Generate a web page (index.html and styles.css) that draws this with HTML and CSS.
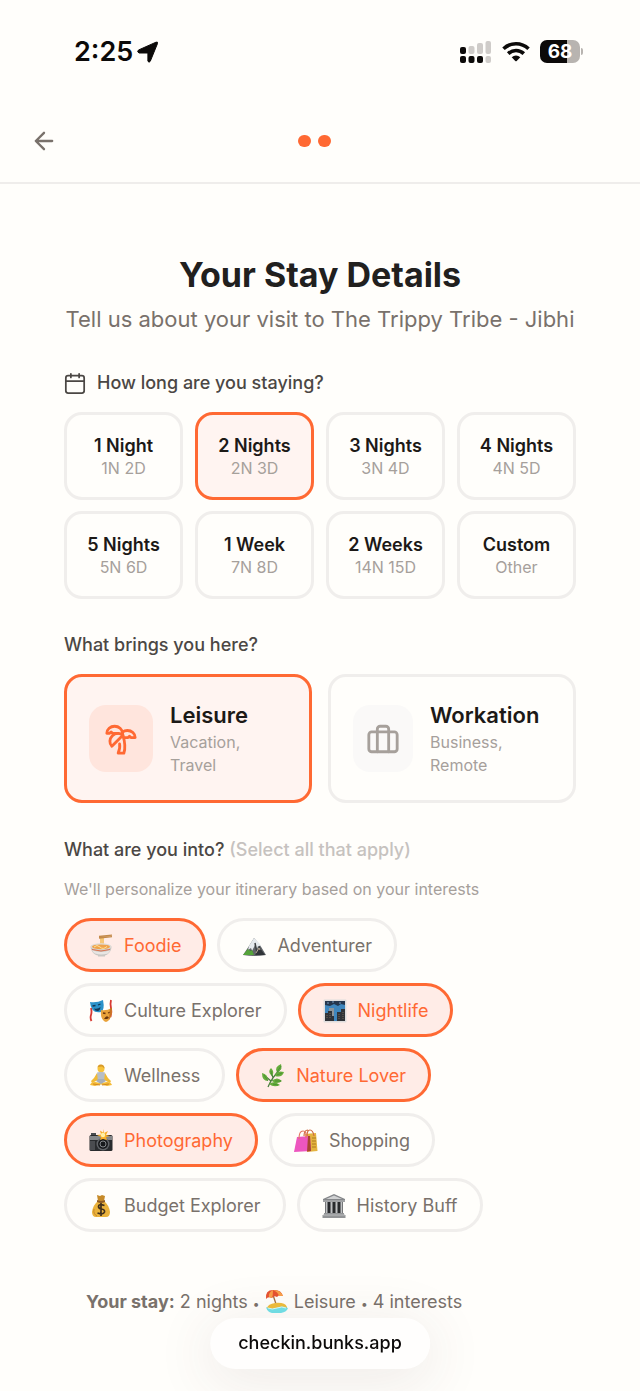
FILE: index.html
```html
<!DOCTYPE html>
<html lang="en">
<head>
<meta charset="utf-8">
<meta name="viewport" content="width=device-width, initial-scale=1">
<title>Your Stay Details</title>
<link rel="stylesheet" href="styles.css">
</head>
<body>
<div class="status">
  <div class="status-side">
    <span class="clock">2:25</span>
    <svg width="22" height="22" viewBox="0 0 22 22" aria-hidden="true"><path d="M1.500 9 19 1.200q2-.7 1.500 1.300L13.300 20.200q-1.300 2-2.400 0V12H2q-2.400-1-.5-3z" fill="#0c0a09" stroke="#0c0a09" stroke-linejoin="round"/></svg>
  </div>
  <div class="status-side status-right">
    <svg width="32" height="23" viewBox="0 0 32 23" aria-hidden="true">
      <g fill="#0c0a09"><rect x="0" y="7" width="6" height="7" rx="2"/><rect x="0" y="16" width="6" height="7" rx="2"/><rect x="8.500" y="16" width="6" height="7" rx="2"/><rect x="17" y="16" width="6" height="7" rx="2"/></g>
      <g fill="#cfccc9"><rect x="8.500" y="6" width="6" height="8" rx="2"/><rect x="17" y="3" width="6" height="11" rx="2"/><rect x="25.500" y="1" width="5.500" height="13" rx="2"/><rect x="25.500" y="16" width="5.500" height="7" rx="2"/></g>
    </svg>
    <svg class="wifi" width="28" height="21" viewBox="0 0 28 21" aria-hidden="true"><g fill="none" stroke="#0c0a09" stroke-width="3.600"><path d="M1.500 7.800a18 18 0 0 1 25 0"/><path d="M6.200 12.600a11.300 11.300 0 0 1 15.600 0"/></g><path d="M9.700 16.200a6.300 6.300 0 0 1 8.600 0L14.700 20q-.7.6-1.400 0z" fill="#0c0a09"/></svg>
    <div class="battery"><span class="battery-level">68</span><span class="battery-tip"></span></div>
  </div>
</div>

<header class="topbar">
  <button class="back" type="button" aria-label="Back"><svg width="28" height="28" viewBox="0 0 24 24" fill="none" stroke="currentColor" stroke-width="2" stroke-linecap="round" stroke-linejoin="round"><path d="m12 19-7-7 7-7M19 12H5"/></svg></button>
  <div class="steps"><span class="dot"></span><span class="dot"></span></div>
  <span class="topbar-end"></span>
</header>

<main class="content">
  <h1 class="title">Your Stay Details</h1>
  <p class="subtitle">Tell us about your visit to The Trippy Tribe - Jibhi</p>

  <section>
    <h2 class="question"><svg class="question-icon" width="22" height="22" viewBox="0 0 24 24" fill="none" stroke="currentColor" stroke-width="1.900" stroke-linecap="round" stroke-linejoin="round"><rect x="2" y="4" width="20" height="19" rx="2.500"/><path d="M7.500 2v4M16.500 2v4M2 10h20"/></svg>How long are you staying?</h2>
    <div class="nights">
      <button type="button" class="night"><b>1 Night</b><span>1N 2D</span></button>
      <button type="button" class="night selected" aria-pressed="true"><b>2 Nights</b><span>2N 3D</span></button>
      <button type="button" class="night"><b>3 Nights</b><span>3N 4D</span></button>
      <button type="button" class="night"><b>4 Nights</b><span>4N 5D</span></button>
      <button type="button" class="night"><b>5 Nights</b><span>5N 6D</span></button>
      <button type="button" class="night"><b>1 Week</b><span>7N 8D</span></button>
      <button type="button" class="night"><b>2 Weeks</b><span>14N 15D</span></button>
      <button type="button" class="night"><b>Custom</b><span>Other</span></button>
    </div>
  </section>

  <section class="purpose">
    <h2 class="question">What brings you here?</h2>
    <div class="purposes">
      <button type="button" class="trip selected" aria-pressed="true">
        <span class="trip-icon"><svg width="34" height="34" viewBox="0 0 24 24" fill="none" stroke="currentColor" stroke-width="2" stroke-linecap="round" stroke-linejoin="round"><path d="M13 8c0-2.760-2.460-5-5.500-5S2 5.240 2 8h2l1-1 1 1h4"/><path d="M13 7.140A5.820 5.820 0 0 1 16.500 6c3.040 0 5.500 2.240 5.500 5h-3l-1-1-1 1h-3"/><path d="M5.890 9.710c-2.150 2.150-2.300 5.470-.35 7.430l4.240-4.250.7-.7.71-.71 2.120-2.120c-1.950-1.960-5.270-1.800-7.420.35"/><path d="M11 15.500c.5 2.500-.17 4.500-1 6.500h4c2-5.500-.5-12-1-14"/></svg></span>
        <span class="trip-text"><b>Leisure</b><span>Vacation,<br>Travel</span></span>
      </button>
      <button type="button" class="trip trip-long">
        <span class="trip-icon"><svg width="34" height="34" viewBox="0 0 24 24" fill="none" stroke="currentColor" stroke-width="2" stroke-linecap="round" stroke-linejoin="round"><path d="M16 21V5a2 2 0 0 0-2-2h-4a2 2 0 0 0-2 2v16"/><rect x="2" y="7" width="20" height="14" rx="2"/></svg></span>
        <span class="trip-text"><b>Workation</b><span>Business,<br>Remote</span></span>
      </button>
    </div>
  </section>

  <section class="interests">
    <h2 class="question">What are you into?&nbsp;<span class="optional">(Select all that apply)</span></h2>
    <p class="hint">We'll personalize your itinerary based on your interests</p>
    <div class="pills">
      <button type="button" class="pill selected" aria-pressed="true"><svg class="emoji" viewBox="0 0 24 24"><path d="M12 13V3M14 13V3" stroke="#f2b43c" stroke-width="1.300"/><path d="m10 2.500 13-1.300M10 4l13-1.300" stroke="#c48a4a" stroke-width="1.300"/><path d="M1.500 12.500C2 18 6 21 9 21.500v1h7v-1c3-1 6.500-4 6.500-9z" fill="#c9c7c4"/><path d="M3 16q9 4 18.500 0-1 2-3 3.700-7 1.500-12.500-.2Q3.500 18 3 16z" fill="#e8e6e3"/><ellipse cx="12" cy="12.500" rx="10.500" ry="3.300" fill="#dedbd7"/><ellipse cx="12" cy="12.800" rx="9" ry="2.400" fill="#f0a34a"/><path d="M5 13q3-3 6 0t7-.5" fill="none" stroke="#ffe29a"/><path d="M3 15.500q9 3 18 0" fill="none" stroke="#dc704c" stroke-width="1"/></svg>Foodie</button>
      <button type="button" class="pill"><svg class="emoji" viewBox="0 0 24 24"><path d="m1 21 6-9 5-8 6 7 6 10q-11 2-23 0z" fill="#62666a"/><path d="m12 4-5 8-1 4 3-2 1 3 3-6 2 4 1-3 3 1-1-3z" fill="#e6eaee"/><path d="m13 9 2 10 3-7M9 16l2 5" stroke="#3d4043" fill="none" stroke-width="1.500"/><path d="m1 21 5-6 2 2 2-1 2 5z" fill="#55a43a"/><path d="m18 14 5 7H13z" fill="#303438"/><path d="m14 19 3-5 1 2" stroke="#b9a995" fill="none"/></svg>Adventurer</button>
      <button type="button" class="pill"><svg class="emoji" viewBox="0 0 24 24"><path d="M2 9q1 4 0 7t.5 6" fill="none" stroke="#d83a32" stroke-width="1.800"/><path d="M22 1q-1 4 0 8t-.5 9" fill="none" stroke="#d83a32" stroke-width="1.800"/><path d="M1 3q7 1 13-2 2 10-2 12Q2 15 1 3z" fill="#2b91c9"/><path d="m3.500 7 3-.5M9 6l2.500-1" stroke="#123753" stroke-width="1.300"/><path d="M5 9.500q4 1 6.500-1.500-.5 4-3 4T5 9.500z" fill="#123753"/><path d="M12 11q5 1 11-2 0 12-6 14-6-2-5-12z" fill="#e9a23a"/><path d="m14 14 2.500.5M19 14l2.500-1" stroke="#68340e" stroke-width="1.300"/><path d="M15 20q3-5 5-1l-2 1z" fill="#68340e"/><path d="m21 9 2 0q0 8-3 12z" fill="#c67125"/></svg>Culture Explorer</button>
      <button type="button" class="pill selected" aria-pressed="true"><svg class="emoji" viewBox="0 0 24 24"><rect x=".5" y=".5" width="23" height="23" rx="1" fill="#dfdddd"/><path d="M2 2h20v20H2z" fill="#3f86bd"/><path d="M2 2h20v4l-4-1-3 2-4-2-4 2-5-1z" fill="#25364d"/><path d="M2 22v-8h3v-2h4v4h2v6zM14 22v-9h4v-3h4v12z" fill="#303338"/><path d="M6 9h5v8H9v-5H6z" fill="#8d9499"/><path d="M4 16v4M7 14v6M16 15v5M20 13v7" stroke="#756957" stroke-dasharray="1 1"/><path d="M4 4h2M9 3h2M16 4h2" stroke="#789bc0"/></svg>Nightlife</button>
      <button type="button" class="pill"><svg class="emoji" viewBox="0 0 24 24"><circle cx="12" cy="4.700" r="3.500" fill="#f7c33b"/><path d="M8.500 4q0-4 4-3.500 3 .5 3 4l-2.500-2-4 .5z" fill="#d89a28"/><path d="m8 9-3 5-3 3 1 2 6-3 1-4zm8 0 3 5 3 3-1 2-6-3-1-4z" fill="#f2bb35"/><path d="M8 8.500 10.500 8h3l2.500.5-1 9H9z" fill="#b7bec6"/><path d="M1 21q1-3 5-3l6 1 6-1q4 0 5 3l-5 1-6-1.500L6 22z" fill="#f5bb35"/><path d="m7 17 5 3 5-3-2-2H9z" fill="#a7afb9"/><path d="m4 20 7 1m9-1-7 1" stroke="#d18923"/></svg>Wellness</button>
      <button type="button" class="pill selected" aria-pressed="true"><svg class="emoji" viewBox="0 0 24 24"><path d="M7 23q3-8 13-19M10 17l-6-5m8 2-2-7m1 9 9 1m-5-7h6" fill="none" stroke="#477b3c" stroke-width="1.200"/><g fill="#65ac3b"><path d="M7 17Q1 17 1 9q6 1 6 8zM11 12q-5-4-1-8 4 4 1 8zM16 8q-3-5 4-8 2 6-4 8zM14 12q1-6 9-4-2 6-9 4zM11 17q5-5 10 0-5 4-10 0zM8 20q5-4 11 1-6 3-11-1z"/></g><path d="m3 11 4 6m3-10 1 5m9-10-4 6m5 1-5 2m4 6h-6m3 4-5-1" stroke="#3c7e31" stroke-width=".6"/></svg>Nature Lover</button>
      <button type="button" class="pill selected" aria-pressed="true"><svg class="emoji" viewBox="0 0 24 24"><rect x=".5" y="6" width="23" height="16" rx="1.500" fill="#292b2e"/><path d="M1 7h22v4H1z" fill="#85878a"/><path d="M2 4h5v2H2zM1 12h5v9H1z" fill="#4a4c50"/><circle cx="14" cy="15" r="6.500" fill="#606368"/><circle cx="14" cy="15" r="5" fill="#17191c"/><circle cx="14" cy="15" r="3" fill="none" stroke="#84878c"/><path d="m14 0 1 4 4-2-2 4 4 1-4 1 1 3-4-1-3 1 1-3-4-2 4-.5-1-4 3 2z" fill="#f8ae27"/><circle cx="14" cy="6" r="2.200" fill="#fff0a4"/></svg>Photography</button>
      <button type="button" class="pill"><svg class="emoji" viewBox="0 0 24 24"><path d="M11 5 22 4l1.500 18L13 23z" fill="#e4b33f"/><path d="M13 7q0-6 3-6t4 6M10 7q0-6 4-6" fill="none" stroke="#cf6b43" stroke-width="1.200"/><path d="M18 9h4m-4 3h4m-4 3h4m-4 3h4" stroke="#ad7a22"/><path d="m3 8 13-1 1 15-17 1z" fill="#ed56bf"/><path d="m14 7 2 0 1 15-4 .5z" fill="#a84532"/><path d="M5 10q0-8 4-8t3 7" fill="none" stroke="#e47763" stroke-width="1.200"/></svg>Shopping</button>
      <button type="button" class="pill"><svg class="emoji" viewBox="0 0 24 24"><path d="m8 1 3 1 2-1 3 1-1 5H9z" fill="#c68a29"/><path d="M9 7h6q5 4 6 11 0 5-4 5H7q-4 0-4-5Q4 11 9 7z" fill="#eab23b"/><path d="M8 6q4 2 8 0v2q-4 2-8 0z" fill="#8d5a23"/><path d="M5 15q-1 5 3 7" fill="none" stroke="#c5862b"/><path d="M15.500 11.500q-6-2-6 1 0 2 3 2.500 3.500.5 3 3-1 3-7 1M12 9v13" fill="none" stroke="#41301b" stroke-width="1.700"/></svg>Budget Explorer</button>
      <button type="button" class="pill"><svg class="emoji" viewBox="0 0 24 24"><path d="M1 5 12 0l11 5v3H1z" fill="#85878a"/><path d="m4 5 8-3.500L20 5z" fill="#d0d1d2"/><path d="M3 8h18v12H3z" fill="#292b2d"/><path d="M4.500 8v12M9.500 8v12M14.500 8v12M19.500 8v12" stroke="#c0c2c3" stroke-width="2"/><path d="M2 19h20v2h1.500v3H.5v-3H2z" fill="#929496"/><path d="M1 7h22M1 21h22" stroke="#bbbdbe"/></svg>History Buff</button>
    </div>
  </section>

  <p class="summary"><strong>Your stay:</strong> 2 nights <span class="bullet">•</span> <svg class="emoji emoji-inline" viewBox="0 0 24 24"><path d="m7 3 5 15" stroke="#a46d3e" stroke-width="1.300"/><path d="M1 10Q0 1 8 1q8-1 10 6-4-2-6 1-3-2-5 1-4-2-6 1z" fill="#e65332"/><path d="M8 1Q3 4 4 8l3 1q1-3 1-8zm0 0q5 2 6 6l4 0q-2-6-10-6z" fill="#f8a04a"/><path d="M2 19q1-4 8-5 10-1 12 4v3H2z" fill="#efbd3c"/><path d="M1 18q4 3 10 1 6-3 12 0-1 4-7 5H7q-5-1-6-6z" fill="#72e2e9"/><path d="M3 19q4 2 9 0t9 0" fill="none" stroke="#d8fbf8"/></svg> Leisure <span class="bullet">•</span> 4 interests</p>
</main>

<a class="address" href="#">checkin.bunks.app</a>
</body>
</html>
```
FILE: styles.css
```css
* { box-sizing: border-box; }

body {
  margin: 0;
  background: #fffefb;
  color: #1c1917;
  font-family: Inter, "Liberation Sans", sans-serif;
}

h1, h2, p { margin: 0; }

button {
  font: inherit;
  color: inherit;
  margin: 0;
  background: none;
  cursor: pointer;
}

svg { flex: none; display: block; }

.status {
  display: flex;
  justify-content: space-between;
  align-items: center;
  height: 103px;
  padding: 0 57px 0 74px;
}
.status-side { display: flex; align-items: center; gap: 4px; }
.status-right { gap: 10px; }
.clock { font-size: 27px; font-weight: 600; line-height: 32px; color: #0c0a09; }
.battery { display: flex; align-items: center; gap: 1px; }
.battery-level {
  width: 40px;
  height: 23px;
  border-radius: 7px;
  background: linear-gradient(90deg, #0c0a09 68%, #b8b4b0 68%);
  color: #fff;
  font-size: 19px;
  font-weight: 700;
  line-height: 23px;
  text-align: center;
}
.battery-tip { width: 2px; height: 7px; border-radius: 0 2px 2px 0; background: #b8b4b0; }

.topbar {
  display: flex;
  justify-content: space-between;
  align-items: center;
  height: 81px;
  padding: 0 30px 4px;
  border-bottom: 2px solid #efedeb;
}
.back { padding: 0; border: 0; color: #79716b; }
.steps { display: flex; gap: 7px; }
.dot { width: 13px; height: 12px; border-radius: 6px; background: #ff6933; }
.topbar-end { width: 40px; }

.content { padding: 71px 64px 77px; }

.title { font-size: 34px; line-height: 40px; font-weight: 700; text-align: center; color: #21201e; }
.subtitle { margin: 8px -16px 36px; font-size: 22px; line-height: 32px; text-align: center; color: #79716b; }

.question {
  display: flex;
  align-items: center;
  margin-bottom: 17px;
  font-size: 18px;
  line-height: 24px;
  font-weight: 500;
  color: #4b4744;
}
.question-icon { margin-right: 11px; }
.optional { color: #c6c2bf; }

.nights { display: grid; grid-template-columns: repeat(4, 1fr); gap: 11px 12px; }
.night {
  padding: 19px 0 17px;
  border: 3px solid #f0eeec;
  border-radius: 18px;
  font-size: 16px;
  line-height: 23px;
  text-align: center;
  color: #a6a09b;
}
.night b, .night span { display: block; }
.night b { font-size: 18px; font-weight: 600; color: #1c1917; }
.night.selected, .trip.selected { border-color: #ff6933; background: #fff4f1; }

.purpose { margin-top: 34px; }
.purposes { display: grid; grid-template-columns: 1fr 1fr; gap: 16px; }
.trip {
  display: flex;
  align-items: center;
  gap: 17px;
  padding: 23px 22px;
  border: 3px solid #f0eeec;
  border-radius: 18px;
  text-align: left;
}
.trip-icon {
  display: flex;
  flex: none;
  align-items: center;
  justify-content: center;
  width: 64px;
  height: 67px;
  border-radius: 17px;
  background: #faf9f8;
  color: #a6a09b;
}
.trip-long .trip-icon { width: 60px; }
.trip.selected .trip-icon { background: #ffe5dd; color: #ff6933; }
.trip-text { font-size: 16px; line-height: 23px; color: #a6a09b; }
.trip-text b { display: block; font-size: 22px; line-height: 31px; font-weight: 600; color: #1c1917; }

.interests { margin-top: 35px; }
.interests .question { margin-bottom: 16px; }
.hint { margin-bottom: 18px; font-size: 16px; line-height: 22px; color: #a6a09b; }
.pills { display: flex; flex-wrap: wrap; gap: 11px; margin-right: 60px; }
.pill {
  display: flex;
  align-items: center;
  gap: 11px;
  height: 54px;
  padding: 2px 22px 0;
  border: 3px solid #f0eeec;
  border-radius: 27px;
  font-size: 18px;
  line-height: 24px;
  color: #79716b;
}
.pill.selected { border-color: #ff6933; background: #ffece7; color: #ff6933; }
.emoji { width: 24px; height: 24px; }
.emoji-inline { display: inline-block; vertical-align: -5px; }

.summary { margin: 57px 0 0 22px; font-size: 18px; line-height: 24px; color: #79716b; }
.summary strong { font-weight: 700; }
.bullet { font-size: 12px; }

.address {
  position: fixed;
  bottom: 22px;
  left: 50%;
  transform: translateX(-50%);
  padding: 13px 28px 14px;
  border-radius: 26px;
  background: #fffefd;
  box-shadow: 0 10px 56px 6px rgba(90, 55, 60, 0.09);
  color: #0c0a09;
  font-size: 18px;
  line-height: 24px;
  font-weight: 500;
  text-decoration: none;
}
```
